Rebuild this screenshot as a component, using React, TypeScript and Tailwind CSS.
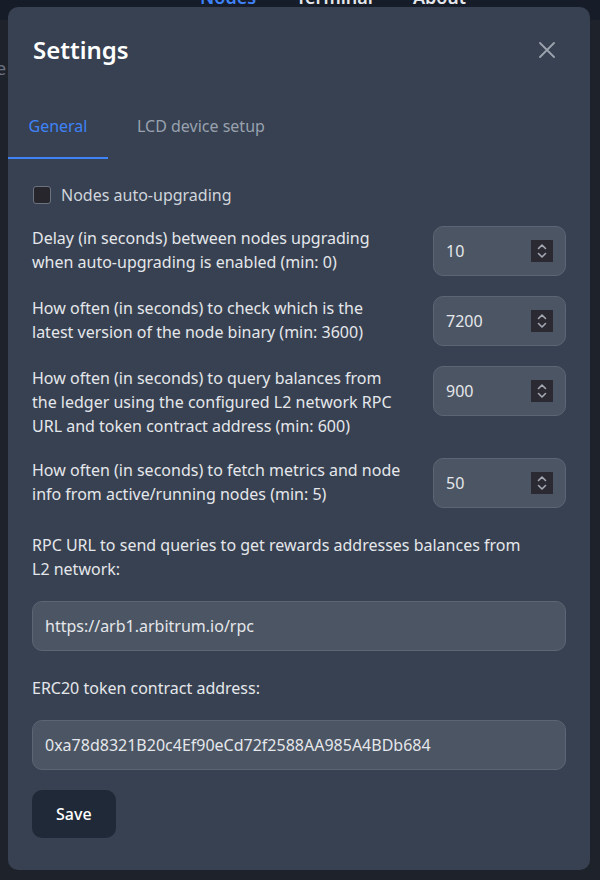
import React, { useState } from "react";

const numberFields = [
  {
    label: "Delay (in seconds) between nodes upgrading when auto-upgrading is enabled (min: 0)",
    value: "10",
  },
  {
    label: "How often (in seconds) to check which is the latest version of the node binary (min: 3600)",
    value: "7200",
  },
  {
    label:
      "How often (in seconds) to query balances from the ledger using the configured L2 network RPC URL and token contract address (min: 600)",
    value: "900",
  },
  {
    label: "How often (in seconds) to fetch metrics and node info from active/running nodes (min: 5)",
    value: "50",
  },
];

function Spinner() {
  return (
    <span className="flex h-[22px] w-[22px] shrink-0 items-center justify-center bg-[#2b2a33]">
      <svg width="10" height="16" viewBox="0 0 10 16" fill="none" stroke="#a3a8b3" strokeWidth="1.6" strokeLinecap="round" strokeLinejoin="round">
        <path d="M1.5 5.5 5 2l3.5 3.5" />
        <path d="M1.5 10.5 5 14l3.5-3.5" />
      </svg>
    </span>
  );
}

function NumberField({ value }: { value: string }) {
  const [v, setV] = useState(value);
  return (
    <div className="flex h-[50px] w-[133px] shrink-0 items-center rounded-[10px] border border-[#5c6574] bg-[#4b5563] pl-3 pr-3">
      <input
        type="text"
        value={v}
        onChange={(e) => setV(e.target.value)}
        className="min-w-0 flex-1 bg-transparent text-base text-gray-200 outline-none"
      />
      <Spinner />
    </div>
  );
}

function TextField({ value }: { value: string }) {
  const [v, setV] = useState(value);
  return (
    <input
      type="text"
      value={v}
      onChange={(e) => setV(e.target.value)}
      className="h-[50px] w-full rounded-[10px] border border-[#5c6574] bg-[#4b5563] px-3 text-base text-gray-200 outline-none"
    />
  );
}

export default function App() {
  const [tab, setTab] = useState(0);
  const [autoUpgrade, setAutoUpgrade] = useState(false);

  return (
    <div className="relative h-[880px] w-[600px] overflow-hidden bg-[#1e232b] font-['Noto_Sans',sans-serif]">
      {/* page behind the dialog */}
      <div className="h-[33px] bg-[#161c28]">
        <div className="-mt-[13px] flex gap-[40px] pl-[200px] text-lg font-semibold leading-5">
          <span className="text-[#3f83f8]">Nodes</span>
          <span className="text-gray-200">Terminal</span>
          <span className="text-gray-200">About</span>
        </div>
      </div>
      <div className="-ml-[4px] mt-[34px] text-lg text-gray-500">e</div>

      {/* settings dialog */}
      <div className="absolute left-[8px] top-[7px] w-[582px] rounded-[10px] bg-[#374151] pb-8">
        <div className="flex items-center justify-between pl-[25px] pr-[35px] pt-[27px]">
          <h2 className="text-2xl font-semibold leading-8 text-white">Settings</h2>
          <button type="button" aria-label="Close">
            <svg width="16" height="16" viewBox="0 0 16 16" stroke="#9ca3af" strokeWidth="1.8" strokeLinecap="round">
              <path d="M1 1l14 14M15 1 1 15" />
            </svg>
          </button>
        </div>

        <div className="mt-[36px] flex">
          <button
            type="button"
            onClick={() => setTab(0)}
            className={`w-[100px] border-b-2 pb-[19px] pt-3 text-center text-base leading-6 ${
              tab === 0 ? "border-[#3f83f8] text-[#3f83f8]" : "border-transparent text-gray-400"
            }`}
          >
            General
          </button>
          <button
            type="button"
            onClick={() => setTab(1)}
            className={`ml-[29px] border-b-2 pb-[19px] pt-3 text-base leading-6 ${
              tab === 1 ? "border-[#3f83f8] text-[#3f83f8]" : "border-transparent text-gray-400"
            }`}
          >
            LCD device setup
          </button>
        </div>

        <div className="flex flex-col px-6">
          <label className="mt-6 flex items-center gap-[10px] leading-6">
            <span
              onClick={() => setAutoUpgrade(!autoUpgrade)}
              className={`ml-[1px] h-[18px] w-[18px] rounded-[3px] border border-[#6b7280] ${
                autoUpgrade ? "bg-[#3f83f8]" : "bg-[#27262c]"
              }`}
            />
            <span className="text-base text-gray-300">Nodes auto-upgrading</span>
          </label>

          <div className="mt-[19px] flex flex-col gap-5">
            {numberFields.map((f) => (
              <div key={f.value} className="flex items-start gap-4">
                <div className="flex-1 pr-[10px] text-base leading-6 text-gray-200">{f.label}</div>
                <NumberField value={f.value} />
              </div>
            ))}
          </div>

          <div className="mt-[25px] pr-[40px] text-base leading-6 text-gray-200">
            RPC URL to send queries to get rewards addresses balances from L2 network:
          </div>
          <div className="mt-5">
            <TextField value="https://arb1.arbitrum.io/rpc" />
          </div>

          <div className="mt-[25px] text-base leading-6 text-gray-200">ERC20 token contract address:</div>
          <div className="mt-5">
            <TextField value="0xa78d8321B20c4Ef90eCd72f2588AA985A4BDb684" />
          </div>

          <div className="mt-5">
            <button
              type="button"
              className="h-12 rounded-[10px] bg-[#1f2937] px-6 text-base font-medium text-white"
            >
              Save
            </button>
          </div>
        </div>
      </div>
    </div>
  );
}
